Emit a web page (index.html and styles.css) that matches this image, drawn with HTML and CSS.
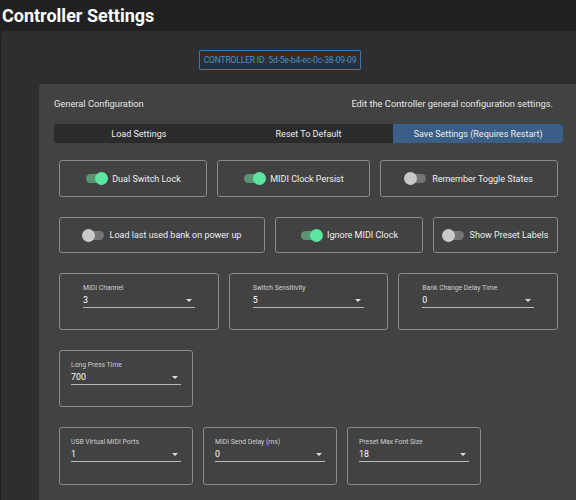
FILE: index.html
```html
<!DOCTYPE html>
<html lang="en">
<head>
    <meta charset="UTF-8">
    <meta name="viewport" content="width=device-width, initial-scale=1.0">
    <title>Controller Settings</title>
    <link rel="stylesheet" href="styles.css">
</head>
<body>
    <h1 class="page-title">Controller Settings</h1>

    <div class="panel">
        <div class="id-row">
            <div class="controller-id">CONTROLLER ID: 5d-5e-b4-ec-0c-38-09-09</div>
        </div>

        <div class="config">
            <div class="config-header">
                <span>General Configuration</span>
                <span>Edit the Controller general configuration settings.</span>
            </div>

            <div class="action-bar">
                <button>Load Settings</button>
                <button>Reset To Default</button>
                <button class="save">Save Settings (Requires Restart)</button>
            </div>

            <!-- toggles -->
            <div class="row row-toggles-1">
                <div class="toggle-card"><span class="switch on"></span>Dual Switch Lock</div>
                <div class="toggle-card"><span class="switch on"></span>MIDI Clock Persist</div>
                <div class="toggle-card"><span class="switch"></span>Remember Toggle States</div>
            </div>
            <div class="row row-toggles-2">
                <div class="toggle-card"><span class="switch"></span>Load last used bank on power up</div>
                <div class="toggle-card"><span class="switch on"></span>Ignore MIDI Clock</div>
                <div class="toggle-card"><span class="switch"></span>Show Preset Labels</div>
            </div>

            <!-- selects -->
            <div class="row row-wide">
                <div class="field wide">
                    <div class="field-label">MIDI Channel</div>
                    <div class="field-input">3<span class="arrow"></span></div>
                </div>
                <div class="field wide">
                    <div class="field-label">Switch Sensitivity</div>
                    <div class="field-input">5<span class="arrow"></span></div>
                </div>
                <div class="field wide">
                    <div class="field-label">Bank Change Delay Time</div>
                    <div class="field-input">0<span class="arrow"></span></div>
                </div>
            </div>
            <div class="row row-small">
                <div class="field">
                    <div class="field-label">Long Press Time</div>
                    <div class="field-input">700<span class="arrow"></span></div>
                </div>
            </div>
            <div class="row row-small">
                <div class="field">
                    <div class="field-label">USB Virtual MIDI Ports</div>
                    <div class="field-input">1<span class="arrow"></span></div>
                </div>
                <div class="field">
                    <div class="field-label">MIDI Send Delay (ms)</div>
                    <div class="field-input">0<span class="arrow"></span></div>
                </div>
                <div class="field">
                    <div class="field-label">Preset Max Font Size</div>
                    <div class="field-input">18<span class="arrow"></span></div>
                </div>
            </div>
        </div>
    </div>
</body>
</html>
```

FILE: styles.css
```css
html, body {
    overflow: hidden;
}
body {
    margin: 0;
    background-color: #212121;
    font-family: Roboto, "Liberation Sans", sans-serif;
    color: #eee;
}
.page-title {
    margin: 0;
    padding: 4px 2px 0;
    font-size: 18px;
    line-height: 24px;
    font-weight: 700;
    color: #fff;
}
.panel {
    margin: 3px 0 0 1px;
    padding-top: 19px;
    background-color: #2e2e2e;
    border-radius: 4px 0 0 0;
}
.id-row {
    display: flex;
    justify-content: center;
    padding-right: 17px;
    margin-bottom: 14px;
}
.controller-id {
    height: 18px;
    line-height: 18px;
    padding: 0 4px;
    border: 1px solid #2f7cbd;
    border-radius: 2px;
    font-size: 8.6px;
    letter-spacing: -0.2px;
    color: #3c91d6;
}
.config {
    margin-left: 38px;
    padding: 10px 13px 15px 15px;
    background-color: #424242;
    border-radius: 4px 0 0 0;
}
.config-header {
    display: flex;
    justify-content: space-between;
    padding-right: 10px;
    height: 20px;
    line-height: 20px;
    margin-bottom: 10px;
    font-size: 9.3px;
    color: #e6e6e6;
}
.action-bar {
    display: grid;
    grid-template-columns: 1fr 1fr 1fr;
    height: 19px;
    background-color: #2b2b2b;
    border-radius: 3px;
}
.action-bar button {
    border: none;
    background: none;
    color: #ececec;
    font-family: inherit;
    font-size: 9px;
    padding: 0;
}
.action-bar .save {
    background-color: #3a5e85;
    border-radius: 0 3px 3px 0;
}
.row {
    display: grid;
    gap: 10px;
    margin: 20px 5px 0;
}
.row-toggles-1 {
    margin-top: 17px;
    grid-template-columns: 148px 153px 1fr;
}
.row-toggles-2 {
    grid-template-columns: 206px 148px 1fr;
}
.row-wide {
    grid-template-columns: 1fr 1fr 1fr;
}
.row-small {
    grid-template-columns: 134px 134px 134px;
}
.toggle-card {
    display: flex;
    align-items: center;
    justify-content: center;
    height: 35px;
    border: 1px solid #8a8a8a;
    border-radius: 3px;
    font-size: 9px;
    color: #efefef;
}
.row-toggles-2 .toggle-card {
    height: 34px;
}
.switch {
    position: relative;
    width: 22px;
    height: 13px;
    margin-right: 5px;
}
.switch::before {
    content: "";
    position: absolute;
    left: 1px;
    right: 1px;
    top: 2px;
    height: 9px;
    border-radius: 5px;
    background-color: #757575;
}
.switch::after {
    content: "";
    position: absolute;
    left: -1px;
    top: 0;
    width: 13px;
    height: 13px;
    border-radius: 50%;
    background-color: #c9c9c9;
}
.switch.on::before {
    background-color: #5a9473;
}
.switch.on::after {
    left: auto;
    right: -1px;
    background-color: #5ce6a1;
}
.field {
    height: 46px;
    padding: 9px 11px 0;
    border: 1px solid #8a8a8a;
    border-radius: 3px;
}
.field.wide {
    padding: 9px 23px 0;
}
.row-small:last-child .field {
    height: 47px;
}
.field-label {
    font-size: 6.8px;
    line-height: 10px;
    color: #cfcfcf;
}
.field-input {
    display: flex;
    justify-content: space-between;
    align-items: center;
    height: 14px;
    border-bottom: 1px solid #b8b8b8;
    font-size: 8.8px;
    color: #fff;
}
.arrow {
    width: 0;
    height: 0;
    margin-right: 3px;
    border-left: 3.5px solid transparent;
    border-right: 3.5px solid transparent;
    border-top: 3.5px solid #dcdcdc;
}
```
